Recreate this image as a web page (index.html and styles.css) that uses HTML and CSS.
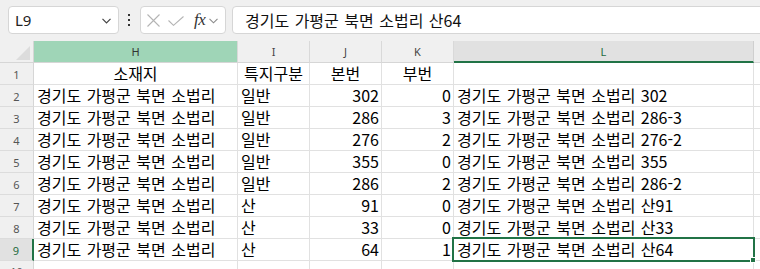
FILE: index.html
```html
<!DOCTYPE html>
<html lang="ko">
<head>
<meta charset="utf-8">
<title>Excel</title>
<link rel="stylesheet" href="styles.css">
</head>
<body>
<div class="app">
  <div class="toolbar">
    <div class="namebox">
      <span class="nb-text">L9</span>
      <svg class="nb-chev" width="9" height="6" viewBox="0 0 9 6"><polyline points="0.5,0.8 4.5,4.8 8.5,0.8" fill="none" stroke="#444" stroke-width="1.2"/></svg>
    </div>
    <div class="kebab"><i></i><i></i><i></i></div>
    <div class="fbtns">
      <svg class="ic-x" width="13" height="13" viewBox="0 0 13 13"><path d="M0.5 0.5 L12.5 12.5 M12.5 0.5 L0.5 12.5" stroke="#b4b4b4" stroke-width="1.1" fill="none"/></svg>
      <svg class="ic-ok" width="16" height="10" viewBox="0 0 16 10"><polyline points="0.5,4.5 5.5,9.3 15.5,0.5" stroke="#b4b4b4" stroke-width="1.1" fill="none"/></svg>
      <span class="fx">fx</span>
      <svg class="fx-chev" width="9" height="6" viewBox="0 0 9 6"><polyline points="0.5,0.8 4.5,4.8 8.5,0.8" fill="none" stroke="#8a8a8a" stroke-width="1.1"/></svg>
    </div>
    <div class="finput">경기도 가평군 북면 소법리 산64</div>
  </div>

  <div class="sheet">
    <div class="grid">
      <div class="corner"><span class="tri"></span></div>
      <div class="ch ch-h">H</div>
      <div class="ch">I</div>
      <div class="ch">J</div>
      <div class="ch">K</div>
      <div class="ch ch-l">L</div>
      <div class="ch ch-m"></div>

      <div class="rh">1</div>
      <div class="c ctr">소재지</div>
      <div class="c ctr">특지구분</div>
      <div class="c ctr">본번</div>
      <div class="c ctr">부번</div>
      <div class="c"></div>
      <div class="c"></div>

      <div class="rh">2</div>
      <div class="c">경기도 가평군 북면 소법리</div>
      <div class="c">일반</div>
      <div class="c r">302</div>
      <div class="c r">0</div>
      <div class="c">경기도 가평군 북면 소법리 302</div>
      <div class="c"></div>

      <div class="rh">3</div>
      <div class="c">경기도 가평군 북면 소법리</div>
      <div class="c">일반</div>
      <div class="c r">286</div>
      <div class="c r">3</div>
      <div class="c">경기도 가평군 북면 소법리 286-3</div>
      <div class="c"></div>

      <div class="rh">4</div>
      <div class="c">경기도 가평군 북면 소법리</div>
      <div class="c">일반</div>
      <div class="c r">276</div>
      <div class="c r">2</div>
      <div class="c">경기도 가평군 북면 소법리 276-2</div>
      <div class="c"></div>

      <div class="rh">5</div>
      <div class="c">경기도 가평군 북면 소법리</div>
      <div class="c">일반</div>
      <div class="c r">355</div>
      <div class="c r">0</div>
      <div class="c">경기도 가평군 북면 소법리 355</div>
      <div class="c"></div>

      <div class="rh">6</div>
      <div class="c">경기도 가평군 북면 소법리</div>
      <div class="c">일반</div>
      <div class="c r">286</div>
      <div class="c r">2</div>
      <div class="c">경기도 가평군 북면 소법리 286-2</div>
      <div class="c"></div>

      <div class="rh">7</div>
      <div class="c">경기도 가평군 북면 소법리</div>
      <div class="c">산</div>
      <div class="c r">91</div>
      <div class="c r">0</div>
      <div class="c">경기도 가평군 북면 소법리 산91</div>
      <div class="c"></div>

      <div class="rh">8</div>
      <div class="c">경기도 가평군 북면 소법리</div>
      <div class="c">산</div>
      <div class="c r">33</div>
      <div class="c r">0</div>
      <div class="c">경기도 가평군 북면 소법리 산33</div>
      <div class="c"></div>

      <div class="rh rh-sel">9</div>
      <div class="c">경기도 가평군 북면 소법리</div>
      <div class="c">산</div>
      <div class="c r">64</div>
      <div class="c r">1</div>
      <div class="c">경기도 가평군 북면 소법리 산64</div>
      <div class="c"></div>

      <div class="rh rh-last">10</div>
      <div class="c"></div>
      <div class="c"></div>
      <div class="c"></div>
      <div class="c"></div>
      <div class="c"></div>
      <div class="c"></div>
    </div>
    <div class="selbox"><span class="handle"></span></div>
  </div>
</div>
</body>
</html>
```

FILE: styles.css
```css
html, body {
  margin: 0;
  padding: 0;
  background: #ffffff;
  overflow: hidden;
}
.app {
  width: 760px;
  height: 269px;
  overflow: hidden;
  font-family: "Noto Sans", "Noto Sans CJK KR", sans-serif;
}
.toolbar {
  height: 41px;
  background: #f0f0f0;
  display: flex;
  align-items: flex-start;
  padding: 6px 0 0 8px;
  box-sizing: border-box;
}
.namebox {
  width: 111px;
  height: 28px;
  box-sizing: border-box;
  background: #fff;
  border: 1px solid #d6d6d6;
  border-radius: 4px;
  display: flex;
  align-items: center;
  justify-content: space-between;
  padding: 0 7px 0 6px;
  color: #222;
}
.nb-text {
  font-size: 15px;
  line-height: 1;
}
.nb-chev { margin-top: 1px; }
.kebab {
  width: 20px;
  height: 28px;
  display: flex;
  flex-direction: column;
  align-items: center;
  justify-content: center;
  gap: 3px;
}
.kebab i {
  display: block;
  width: 2px;
  height: 2px;
  background: #333;
}
.fbtns {
  width: 86px;
  height: 28px;
  box-sizing: border-box;
  background: #fff;
  border: 1px solid #d6d6d6;
  border-radius: 4px;
  display: flex;
  align-items: center;
  padding-left: 6px;
  margin-left: 1px;
}
.ic-x { margin-right: 8px; }
.ic-ok { margin-right: 10px; margin-top: 1px; }
.fx {
  font-family: "Liberation Serif", serif;
  font-style: italic;
  font-size: 17px;
  color: #333;
  line-height: 1;
  margin-right: 4px;
  margin-top: -2px;
  letter-spacing: -0.5px;
}
.fx-chev { margin-top: 1px; }
.finput {
  flex: 1;
  margin-left: 6px;
  margin-right: -20px;
  height: 28px;
  box-sizing: border-box;
  background: #fff;
  border: 1px solid #d6d6d6;
  border-radius: 4px;
  font-family: "Noto Sans CJK KR", sans-serif;
  font-size: 16px;
  word-spacing: 1px;
  color: #111;
  display: flex;
  align-items: center;
  padding-left: 12px;
  padding-bottom: 1px;
}
.sheet {
  position: relative;
}
.grid {
  display: grid;
  grid-template-columns: 34px 204px 72px 72px 72px 300px 20px;
  grid-auto-rows: 22px;
  width: 774px;
}
.corner {
  background: #f0f0f0;
  border-right: 1px solid #d6d6d6;
  border-bottom: 1px solid #d6d6d6;
  box-sizing: border-box;
  position: relative;
}
.tri {
  position: absolute;
  right: 3px;
  bottom: 2px;
  width: 0;
  height: 0;
  border-left: 14px solid transparent;
  border-bottom: 14px solid #dcdcdc;
}
.ch {
  background: #f0f0f0;
  border-right: 1px solid #d9d9d9;
  border-bottom: 1px solid #d6d6d6;
  box-sizing: border-box;
  font-size: 11px;
  color: #444;
  display: flex;
  align-items: center;
  justify-content: center;
}
.ch-h {
  background: #9fd5b7;
  color: #333;
}
.ch-l {
  background: #e1e1e1;
  color: #1f6b40;
  border-bottom: 2px solid #217346;
  border-right: 1px solid #cfcfcf;
}
.ch-m { border-right: none; }
.rh {
  background: #f0f0f0;
  border-right: 1px solid #d6d6d6;
  border-bottom: 1px solid #dcdcdc;
  box-sizing: border-box;
  font-size: 11px;
  color: #555;
  display: flex;
  align-items: center;
  justify-content: center;
  padding-top: 1px;
}
.rh-last {
  align-items: flex-start;
  padding-top: 5px;
  line-height: 1;
}
.rh-sel {
  background: #e1e1e1;
  color: #1f6b40;
  border-right: 2px solid #217346;
}
.c {
  border-right: 1px solid #e1e1e1;
  border-bottom: 1px solid #e1e1e1;
  box-sizing: border-box;
  font-family: "Noto Sans CJK KR", sans-serif;
  font-size: 16px;
  word-spacing: 1px;
  color: #000;
  display: flex;
  align-items: center;
  padding: 0 3px;
  white-space: nowrap;
  line-height: 21px;
}
.c.r { justify-content: flex-end; padding-right: 2px; }
.c.ctr { justify-content: center; }
.selbox {
  position: absolute;
  left: 452px;
  top: 196px;
  width: 303px;
  height: 25px;
  box-sizing: border-box;
  border: 2px solid #217346;
}
.handle {
  position: absolute;
  right: -3px;
  bottom: -3px;
  width: 6px;
  height: 6px;
  background: #217346;
  border: 1px solid #fff;
  box-sizing: border-box;
}
```
